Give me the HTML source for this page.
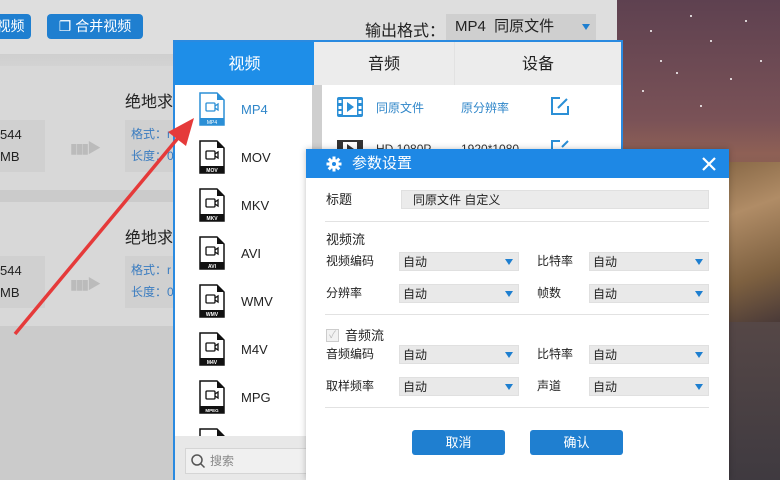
<!DOCTYPE html>
<html><head><meta charset="utf-8"><style>
*{margin:0;padding:0;box-sizing:border-box}
body{width:780px;height:480px;overflow:hidden;position:relative;font-family:"Liberation Sans","Noto Sans CJK SC",sans-serif;background:#cbcbcb}
.abs{position:absolute}
.sky{left:617px;top:0;width:163px;height:480px;background:linear-gradient(180deg,#5e4150 0%,#7a5257 25%,#8e6055 32%,#5a4a48 60%,#3f3a40 100%)}
.rock{left:729px;top:162px;width:51px;height:160px;background:linear-gradient(160deg,#8a6a48,#b08c66 30%,#7d6040 70%,#4a3a38)}
.btn{background:#1f7fd0;color:#fff;border-radius:4px;font-size:14px;line-height:25px;text-align:center}
.icon{width:26px;height:34px;position:absolute;left:199px}
.item{position:absolute;left:241px;font-size:13px;color:#222}
.lbl{position:absolute;font-size:12px;color:#222;line-height:19px}
.sel{position:absolute;height:19px;background:#e9e9e9;border:1px solid #e0e0e0;font-size:12px;line-height:19px;padding-left:3px;color:#222}
.sel:after{content:"";position:absolute;right:5px;top:6px;border-left:4px solid transparent;border-right:4px solid transparent;border-top:6px solid #1e7fd0}
.hr{position:absolute;left:325px;width:384px;height:1px;background:#e2e2e2}
.st{position:absolute;width:2px;height:2px;background:#fff;border-radius:1px}
</style></head><body>
<div class="abs sky"></div>
<div class="abs rock"></div>
<div class="st" style="left:650px;top:30px"></div><div class="st" style="left:710px;top:40px"></div>
<div class="st" style="left:730px;top:78px"></div><div class="st" style="left:642px;top:90px"></div>
<div class="st" style="left:676px;top:72px"></div><div class="st" style="left:700px;top:105px"></div>
<div class="st" style="left:660px;top:60px"></div><div class="st" style="left:745px;top:20px"></div>
<div class="st" style="left:690px;top:15px"></div><div class="st" style="left:760px;top:60px"></div>
<!-- app bg -->
<div class="abs" style="left:0;top:0;width:617px;height:54px;background:#dedede"></div>
<div class="abs" style="left:0;top:54px;width:617px;height:12px;background:linear-gradient(#cfcfcf,#d3d3d3)"></div>
<div class="abs" style="left:0;top:66px;width:617px;height:124px;background:#d8d8d8"></div>
<div class="abs" style="left:0;top:202px;width:617px;height:124px;background:#d8d8d8"></div>
<div class="abs btn" style="left:-10px;top:14px;width:41px">视频</div>
<div class="abs btn" style="left:47px;top:14px;width:96px">❐ 合并视频</div>
<div class="abs" style="left:365px;top:17px;font-size:16px;color:#222">输出格式：</div>
<div class="abs" style="left:446px;top:14px;width:150px;height:26px;background:#cfcfcf;font-size:15px;line-height:26px;padding-left:9px;color:#222">MP4 &nbsp;同原文件<span style="position:absolute;right:6px;top:10px;border-left:4px solid transparent;border-right:4px solid transparent;border-top:6px solid #1e7fd0"></span></div>
<div class="abs" style="left:125px;top:88px;font-size:16px;color:#222">绝地求</div>
<div class="abs" style="left:125px;top:224px;font-size:16px;color:#222">绝地求</div>
<div class="abs" style="left:0;top:120px;width:45px;height:52px;background:#d0d0d0;font-size:13px;color:#222;line-height:22px;padding-top:4px">544<br>MB</div>
<div class="abs" style="left:0;top:256px;width:45px;height:52px;background:#d0d0d0;font-size:13px;color:#222;line-height:22px;padding-top:4px">544<br>MB</div>
<div class="abs" style="left:125px;top:120px;width:50px;height:52px;background:#d0d0d0;font-size:12px;color:#3a7cc0;line-height:22px;padding:3px 0 0 6px">格式：r<br>长度：0</div>
<div class="abs" style="left:125px;top:256px;width:50px;height:52px;background:#d0d0d0;font-size:12px;color:#3a7cc0;line-height:22px;padding:3px 0 0 6px">格式：r<br>长度：0</div>
<div class="abs" style="left:70px;top:138px;color:#bbb;font-size:14px;letter-spacing:-2px">▮▮▮▶</div>
<div class="abs" style="left:70px;top:274px;color:#bbb;font-size:14px;letter-spacing:-2px">▮▮▮▶</div>
<!-- format panel -->
<div class="abs" style="left:173px;top:40px;width:450px;height:440px;background:#fff;border:2px solid #2a8ae0;border-bottom:none"></div>
<div class="abs" style="left:175px;top:42px;width:139px;height:43px;background:#1e8ee8;color:#fff;font-size:16px;text-align:center;line-height:45px">视频</div>
<div class="abs" style="left:314px;top:42px;width:140px;height:43px;background:#ececec;font-size:16px;text-align:center;line-height:45px;color:#222">音频</div>
<div class="abs" style="left:454px;top:42px;width:167px;height:43px;background:#ececec;font-size:16px;text-align:center;line-height:45px;color:#222;border-left:1px solid #e2e2e2">设备</div>
<div class="abs" style="left:312px;top:85px;width:10px;height:395px;background:#cfcfcf"></div>
<svg class="abs" style="left:336px;top:96px" width="28" height="22"><rect x="1" y="1" width="26" height="20" rx="2" fill="#2b8fd6"/><rect x="7" y="3" width="14" height="16" fill="#fff"/><path d="M11 6l7 5-7 5z" fill="#2b8fd6"/><rect x="2.5" y="4" width="3" height="3" fill="#fff"/><rect x="2.5" y="10" width="3" height="3" fill="#fff"/><rect x="2.5" y="15" width="3" height="3" fill="#fff"/><rect x="22.5" y="4" width="3" height="3" fill="#fff"/><rect x="22.5" y="10" width="3" height="3" fill="#fff"/><rect x="22.5" y="15" width="3" height="3" fill="#fff"/></svg>
<div class="abs" style="left:376px;top:99px;font-size:12px;color:#2f86c9">同原文件</div>
<div class="abs" style="left:461px;top:99px;font-size:12px;color:#2f86c9">原分辨率</div>
<svg class="abs" style="left:550px;top:96px" width="20" height="20"><path d="M10 2H2v16h16v-8" fill="none" stroke="#2b8fd6" stroke-width="2"/><path d="M8 12l9-9" stroke="#2b8fd6" stroke-width="2"/></svg>
<svg class="abs" style="left:336px;top:139px" width="28" height="12"><rect x="1" y="1" width="26" height="14" fill="#333"/><rect x="7" y="3" width="14" height="12" fill="#fff"/><path d="M11 5l7 5-7 5z" fill="#333"/></svg>
<div class="abs" style="left:376px;top:142px;font-size:12px;color:#333">HD 1080P</div>
<div class="abs" style="left:461px;top:142px;font-size:12px;color:#333">1920*1080</div>
<svg class="abs" style="left:550px;top:139px" width="20" height="10"><path d="M10 2H2v10" fill="none" stroke="#2b8fd6" stroke-width="2"/><path d="M12 8l6-6" stroke="#2b8fd6" stroke-width="2"/></svg>
<!-- list icons -->
<svg class="icon" style="top:92px" viewBox="0 0 26 34"><path d="M1 1h17l7 7v25H1z" fill="#fff" stroke="#2b8fd6" stroke-width="1.5"/><path d="M18 1v7h7z" fill="#2b8fd6"/><rect x="1" y="26" width="24" height="7" fill="#2b8fd6"/><rect x="7" y="11" width="9" height="8" rx="1" fill="none" stroke="#2b8fd6" stroke-width="1.3"/><path d="M16 14l3-2v6l-3-2" fill="none" stroke="#2b8fd6" stroke-width="1.3"/><text x="13" y="32" font-size="5" fill="#fff" text-anchor="middle" font-family="Liberation Sans">MP4</text></svg>
<div class="item" style="top:102px;color:#2f86c9">MP4</div>
<svg class="icon" style="top:140px" viewBox="0 0 26 34"><path d="M1 1h17l7 7v25H1z" fill="#fff" stroke="#111" stroke-width="1.5"/><path d="M18 1v7h7z" fill="#111"/><rect x="1" y="26" width="24" height="7" fill="#111"/><rect x="7" y="11" width="9" height="8" rx="1" fill="none" stroke="#111" stroke-width="1.3"/><path d="M16 14l3-2v6l-3-2" fill="none" stroke="#111" stroke-width="1.3"/><text x="13" y="32" font-size="5" fill="#fff" text-anchor="middle" font-weight="bold" font-family="Liberation Sans">MOV</text></svg>
<div class="item" style="top:150px">MOV</div>
<svg class="icon" style="top:188px" viewBox="0 0 26 34"><path d="M1 1h17l7 7v25H1z" fill="#fff" stroke="#111" stroke-width="1.5"/><path d="M18 1v7h7z" fill="#111"/><rect x="1" y="26" width="24" height="7" fill="#111"/><rect x="7" y="11" width="9" height="8" rx="1" fill="none" stroke="#111" stroke-width="1.3"/><path d="M16 14l3-2v6l-3-2" fill="none" stroke="#111" stroke-width="1.3"/><text x="13" y="32" font-size="5" fill="#fff" text-anchor="middle" font-weight="bold" font-family="Liberation Sans">MKV</text></svg>
<div class="item" style="top:198px">MKV</div>
<svg class="icon" style="top:236px" viewBox="0 0 26 34"><path d="M1 1h17l7 7v25H1z" fill="#fff" stroke="#111" stroke-width="1.5"/><path d="M18 1v7h7z" fill="#111"/><rect x="1" y="26" width="24" height="7" fill="#111"/><rect x="7" y="11" width="9" height="8" rx="1" fill="none" stroke="#111" stroke-width="1.3"/><path d="M16 14l3-2v6l-3-2" fill="none" stroke="#111" stroke-width="1.3"/><text x="13" y="32" font-size="5" fill="#fff" text-anchor="middle" font-weight="bold" font-family="Liberation Sans">AVI</text></svg>
<div class="item" style="top:246px">AVI</div>
<svg class="icon" style="top:284px" viewBox="0 0 26 34"><path d="M1 1h17l7 7v25H1z" fill="#fff" stroke="#111" stroke-width="1.5"/><path d="M18 1v7h7z" fill="#111"/><rect x="1" y="26" width="24" height="7" fill="#111"/><rect x="7" y="11" width="9" height="8" rx="1" fill="none" stroke="#111" stroke-width="1.3"/><path d="M16 14l3-2v6l-3-2" fill="none" stroke="#111" stroke-width="1.3"/><text x="13" y="32" font-size="5" fill="#fff" text-anchor="middle" font-weight="bold" font-family="Liberation Sans">WMV</text></svg>
<div class="item" style="top:294px">WMV</div>
<svg class="icon" style="top:332px" viewBox="0 0 26 34"><path d="M1 1h17l7 7v25H1z" fill="#fff" stroke="#111" stroke-width="1.5"/><path d="M18 1v7h7z" fill="#111"/><rect x="1" y="26" width="24" height="7" fill="#111"/><rect x="7" y="11" width="9" height="8" rx="1" fill="none" stroke="#111" stroke-width="1.3"/><path d="M16 14l3-2v6l-3-2" fill="none" stroke="#111" stroke-width="1.3"/><text x="13" y="32" font-size="5" fill="#fff" text-anchor="middle" font-weight="bold" font-family="Liberation Sans">M4V</text></svg>
<div class="item" style="top:342px">M4V</div>
<svg class="icon" style="top:380px" viewBox="0 0 26 34"><path d="M1 1h17l7 7v25H1z" fill="#fff" stroke="#111" stroke-width="1.5"/><path d="M18 1v7h7z" fill="#111"/><rect x="1" y="26" width="24" height="7" fill="#111"/><rect x="7" y="11" width="9" height="8" rx="1" fill="none" stroke="#111" stroke-width="1.3"/><path d="M16 14l3-2v6l-3-2" fill="none" stroke="#111" stroke-width="1.3"/><text x="13" y="32" font-size="4.5" fill="#fff" text-anchor="middle" font-weight="bold" font-family="Liberation Sans">MPEG</text></svg>
<div class="item" style="top:390px">MPG</div>
<svg class="icon" style="top:428px" viewBox="0 0 26 34"><path d="M1 1h17l7 7v25H1z" fill="#fff" stroke="#111" stroke-width="1.5"/><path d="M18 1v7h7z" fill="#111"/></svg>
<div class="abs" style="left:175px;top:436px;width:137px;height:44px;background:#e8e8e8"></div>
<div class="abs" style="left:185px;top:448px;width:125px;height:26px;background:#f0f0f0;border:1px solid #d5d5d5;font-size:12px;color:#888;line-height:24px;padding-left:24px">搜索</div>
<svg class="abs" style="left:190px;top:453px" width="16" height="16"><circle cx="7" cy="7" r="5" fill="none" stroke="#555" stroke-width="1.5"/><path d="M10.5 10.5l4 4" stroke="#555" stroke-width="1.5"/></svg>
<!-- arrow -->
<svg class="abs" style="left:0;top:0" width="220" height="360"><path d="M15 334L178 138" stroke="#e53a3a" stroke-width="3.5"/><path d="M194 118L168 132L186 146z" fill="#e53a3a"/></svg>
<!-- dialog -->
<div class="abs" style="left:306px;top:149px;width:423px;height:331px;background:#fff;box-shadow:0 0 6px rgba(0,0,0,.25)"></div>
<div class="abs" style="left:306px;top:149px;width:423px;height:29px;background:#1e88e5;color:#fff;font-size:15px;line-height:29px;padding-left:46px">参数设置</div>
<svg class="abs" style="left:326px;top:156px" width="16" height="16" viewBox="0 0 16 16"><g fill="#fff"><circle cx="8" cy="8" r="5"/><rect x="6.5" y="0.5" width="3" height="15"/><rect x="0.5" y="6.5" width="15" height="3"/><rect x="6.5" y="0.5" width="3" height="15" transform="rotate(45 8 8)"/><rect x="6.5" y="0.5" width="3" height="15" transform="rotate(-45 8 8)"/></g><circle cx="8" cy="8" r="2" fill="#1e88e5"/></svg>
<svg class="abs" style="left:701px;top:156px" width="16" height="16"><path d="M2 2l12 12M14 2L2 14" stroke="#fff" stroke-width="2.2"/></svg>
<div class="lbl" style="left:326px;top:190px;font-size:13px">标题</div>
<div class="abs" style="left:401px;top:190px;width:308px;height:19px;background:#ebebeb;border:1px solid #e0e0e0;font-size:12px;line-height:18px;padding-left:11px;color:#222">同原文件 自定义</div>
<div class="hr" style="top:221px"></div>
<div class="lbl" style="left:326px;top:230px;font-size:13px">视频流</div>
<div class="lbl" style="left:326px;top:252px">视频编码</div>
<div class="sel" style="left:399px;top:252px;width:120px">自动</div>
<div class="lbl" style="left:537px;top:252px">比特率</div>
<div class="sel" style="left:589px;top:252px;width:120px">自动</div>
<div class="lbl" style="left:326px;top:284px">分辨率</div>
<div class="sel" style="left:399px;top:284px;width:120px">自动</div>
<div class="lbl" style="left:537px;top:284px">帧数</div>
<div class="sel" style="left:589px;top:284px;width:120px">自动</div>
<div class="hr" style="top:314px"></div>
<div class="abs" style="left:326px;top:329px;width:13px;height:13px;border:1px solid #ccc;background:#f2f2f2;font-size:10px;color:#bbb;line-height:11px;text-align:center">✓</div>
<div class="lbl" style="left:345px;top:326px;font-size:13px">音频流</div>
<div class="lbl" style="left:326px;top:345px">音频编码</div>
<div class="sel" style="left:399px;top:345px;width:120px">自动</div>
<div class="lbl" style="left:537px;top:345px">比特率</div>
<div class="sel" style="left:589px;top:345px;width:120px">自动</div>
<div class="lbl" style="left:326px;top:377px">取样频率</div>
<div class="sel" style="left:399px;top:377px;width:120px">自动</div>
<div class="lbl" style="left:537px;top:377px">声道</div>
<div class="sel" style="left:589px;top:377px;width:120px">自动</div>
<div class="hr" style="top:407px"></div>
<div class="abs btn" style="left:412px;top:430px;width:93px;border-radius:3px;font-size:13px">取消</div>
<div class="abs btn" style="left:530px;top:430px;width:93px;border-radius:3px;font-size:13px">确认</div>
</body></html>
